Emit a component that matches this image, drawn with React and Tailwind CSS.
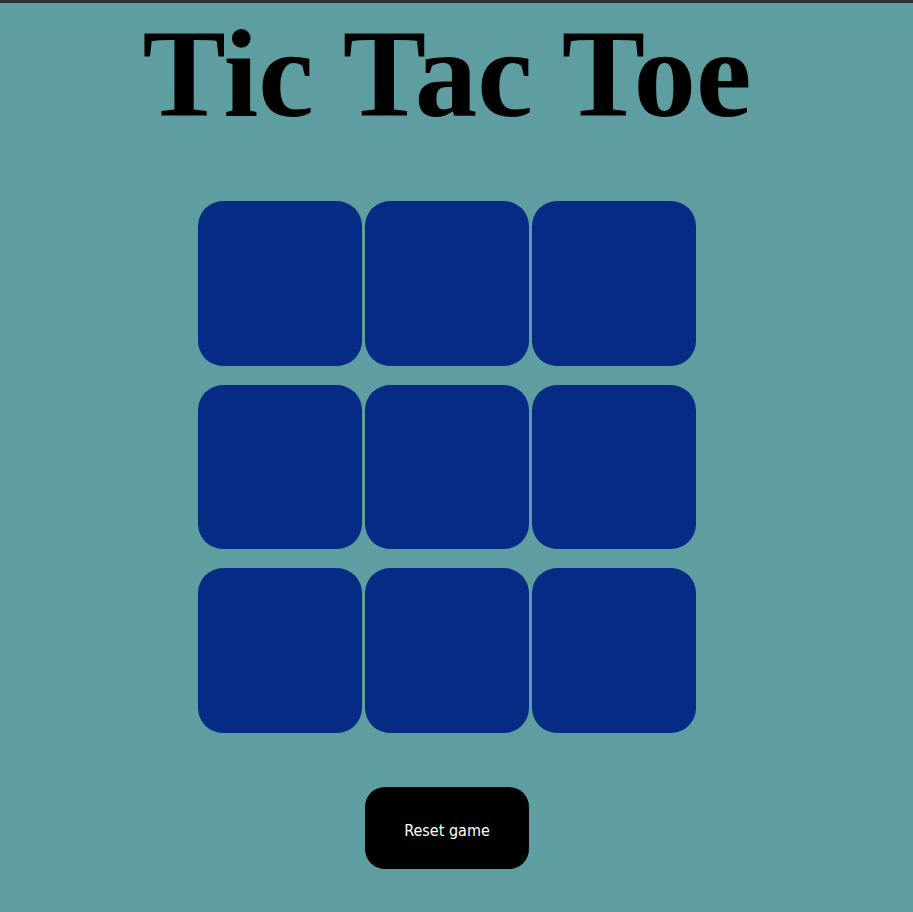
export default function App() {
  const cells = Array.from({ length: 9 });
  return (
    <div className="min-h-[912px] w-full bg-[#5f9ea0] border-t-[3px] border-[#2d2d33]">
      <div className="w-[894px] flex flex-col items-center">
        <h1 className="mt-[-4px] text-[125px] leading-[150px] font-bold text-black [font-family:'Liberation_Serif',serif]">
          Tic Tac Toe
        </h1>
        <div className="mt-[52px] grid grid-cols-[164px_164px_164px] gap-x-[3px] gap-y-[19px]">
          {cells.map((_, i) => (
            <div key={i} className="w-[164px] h-[164.5px] rounded-[25px] bg-[#052b85]" />
          ))}
        </div>
        <button className="mt-[54px] w-[164px] h-[82px] pt-[6px] rounded-[20px] bg-black text-white text-[16px] [font-family:'DejaVu_Sans_Condensed','DejaVu_Sans',sans-serif]">
          Reset game
        </button>
      </div>
    </div>
  );
}
